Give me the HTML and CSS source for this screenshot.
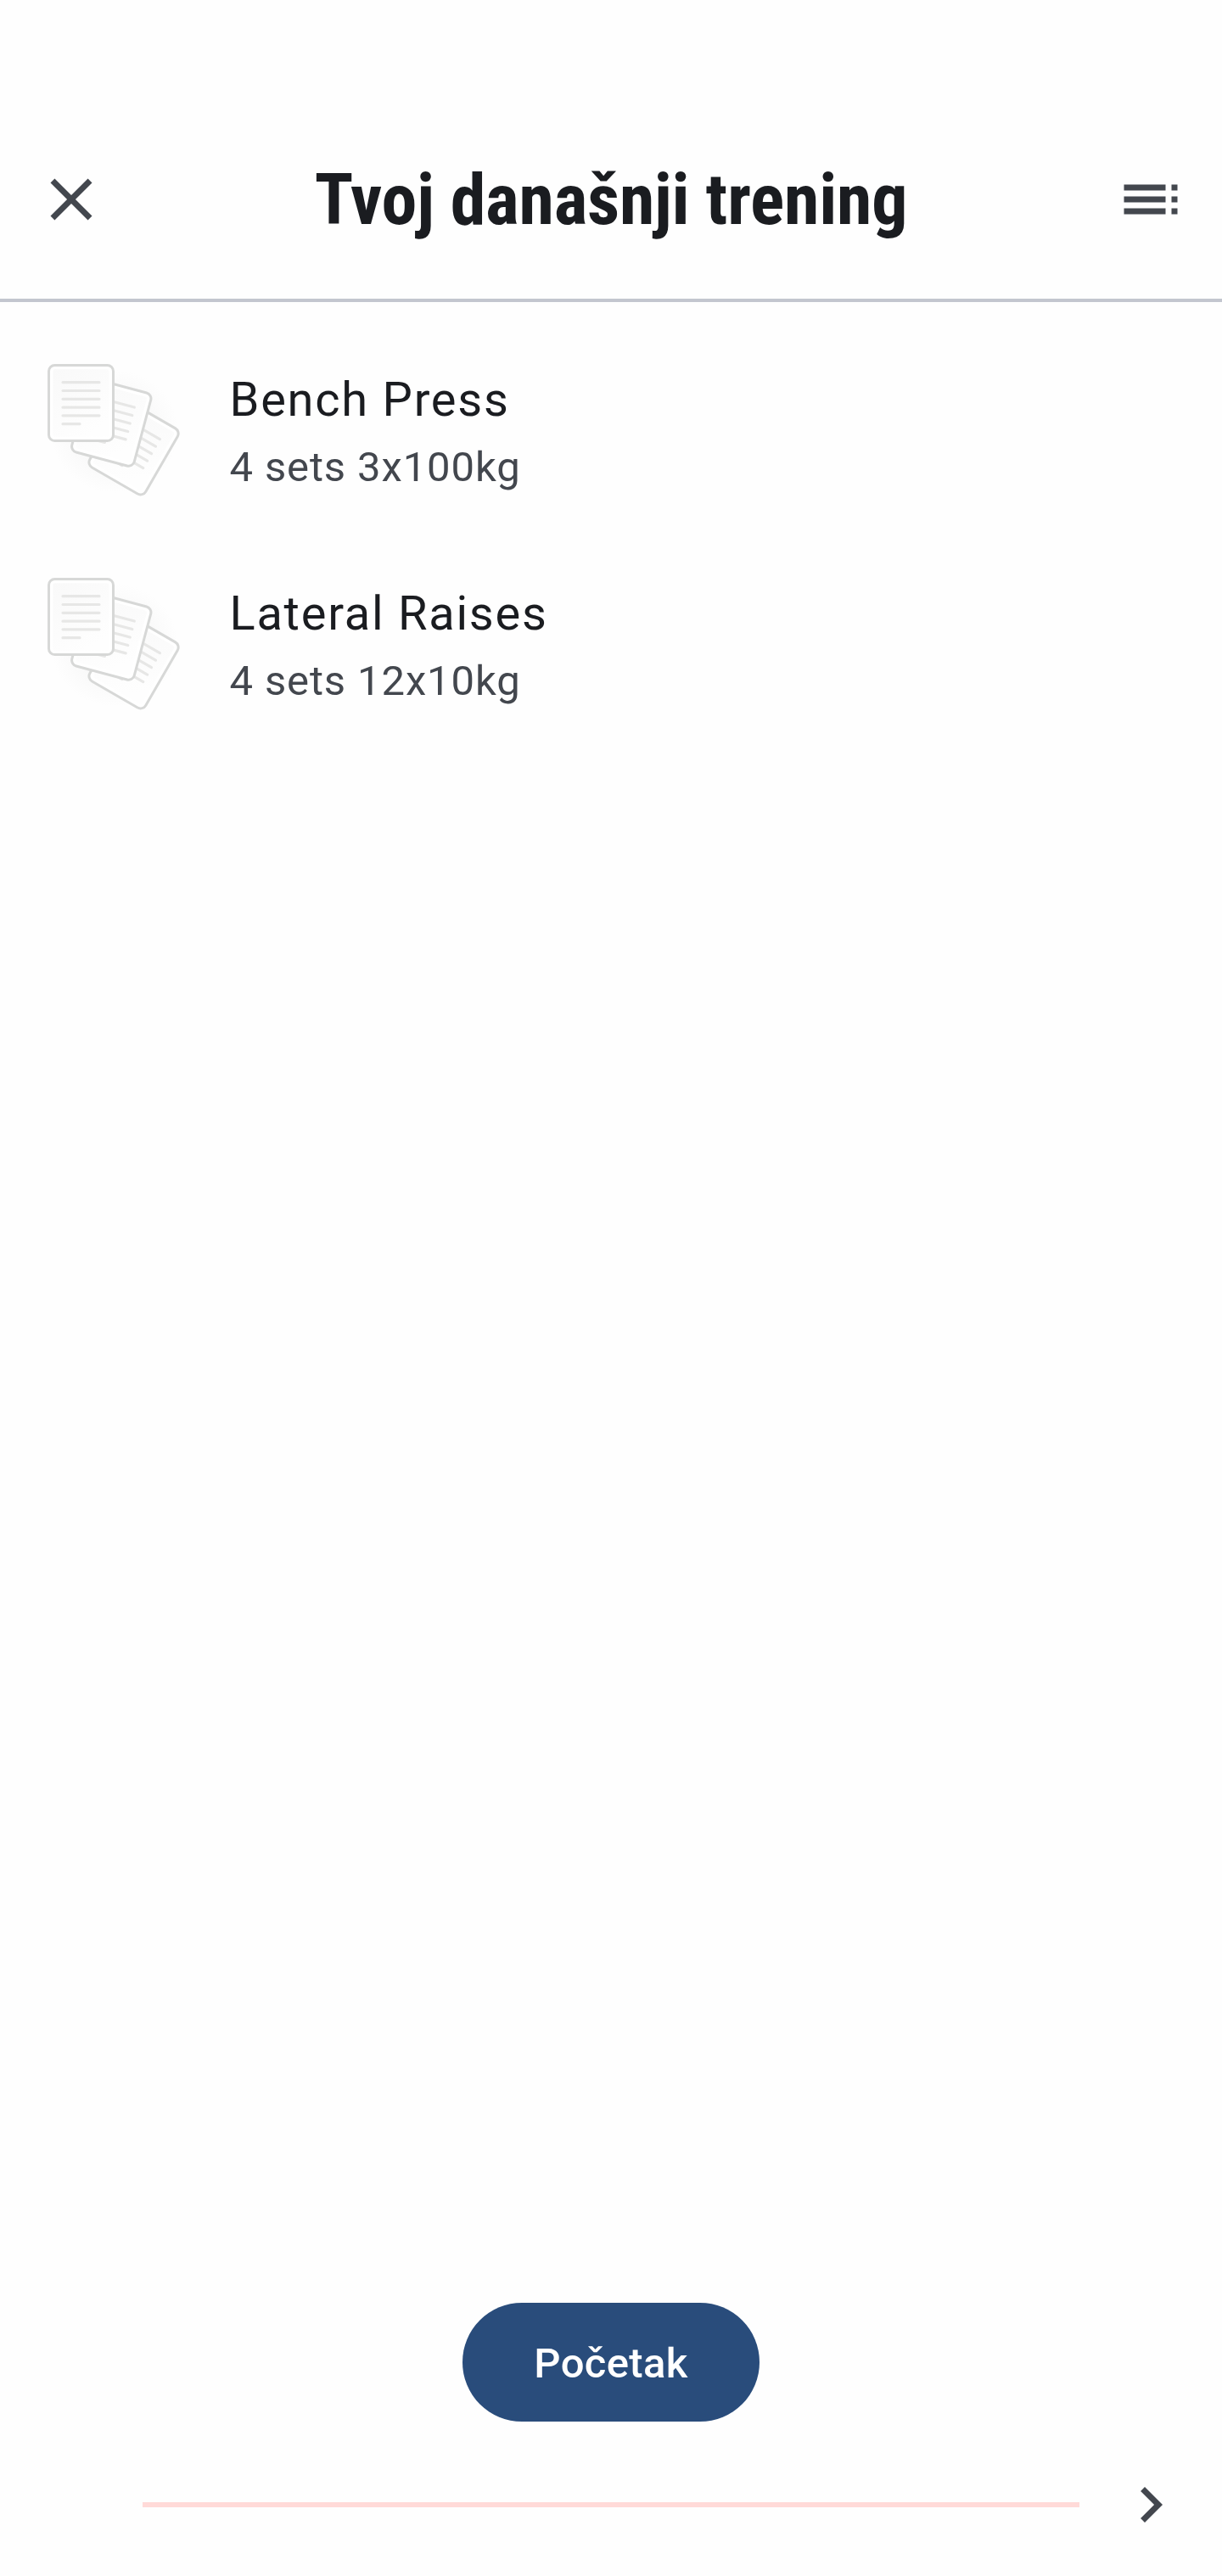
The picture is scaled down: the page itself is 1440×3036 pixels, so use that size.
FILE: index.html
```html
<!DOCTYPE html>
<html lang="hr">
<head>
<meta charset="utf-8">
<title>Tvoj današnji trening</title>
<link rel="stylesheet" href="styles.css">
</head>
<body>
<svg class="defs" aria-hidden="true">
  <defs>
    <radialGradient id="haze">
      <stop offset="0.6" stop-color="#f9f9f9"/>
      <stop offset="1" stop-color="#fefefe"/>
    </radialGradient>
    <linearGradient id="paper" x1="0" y1="0" x2="0.6" y2="1">
      <stop offset="0" stop-color="#f9f9f9"/>
      <stop offset="1" stop-color="#fefefe"/>
    </linearGradient>
    <g id="sheet">
      <rect x="4.5" y="4.5" width="228" height="267" rx="21" fill="#fff" stroke="#d7d8d7" stroke-width="9"/>
      <rect x="19" y="19" width="199" height="238" rx="8" fill="url(#paper)"/>
      <path d="M54 65H183M54 94.500H183M54 124H183M54 153.500H183M54 182.500H183M54 212H114" fill="none" stroke="#e7e7e6" stroke-width="9.500" stroke-linecap="round"/>
    </g>
    <symbol id="papers" viewBox="0 0 660 660">
      <ellipse cx="315" cy="325" rx="225" ry="218" fill="url(#haze)"/>
      <use href="#sheet" transform="translate(349 205) rotate(30)"/>
      <use href="#sheet" transform="translate(225 130) rotate(15)"/>
      <use href="#sheet" transform="translate(78 87)"/>
    </symbol>
  </defs>
</svg>
<div class="screen">
  <header class="topbar">
    <button class="icon-btn" aria-label="Zatvori"><svg class="icon" viewBox="0 0 24 24"><path d="M19 6.410L17.590 5 12 10.590 6.410 5 5 6.410 10.590 12 5 17.590 6.410 19 12 13.410 17.590 19 19 17.590 13.410 12z"/></svg></button>
    <h1 class="title">Tvoj današnji trening</h1>
    <button class="icon-btn" aria-label="Popis"><svg class="icon" viewBox="0 0 24 24"><path d="M3 9h14V7H3v2zm0 4h14v-2H3v2zm0 4h14v-2H3v2zm16 0h2v-2h-2v2zm0-10v2h2V7h-2zm0 6h2v-2h-2v2z"/></svg></button>
  </header>
  <main class="list">
    <div class="row">
      <svg class="thumb"><use href="#papers"/></svg>
      <div class="texts">
        <div class="name">Bench Press</div>
        <div class="detail">4 sets 3x100kg</div>
      </div>
    </div>
    <div class="row">
      <svg class="thumb"><use href="#papers"/></svg>
      <div class="texts">
        <div class="name">Lateral Raises</div>
        <div class="detail">4 sets 12x10kg</div>
      </div>
    </div>
  </main>
  <button class="start">Početak</button>
  <footer class="pager">
    <div class="progress"></div>
    <button class="icon-btn" aria-label="Dalje"><svg class="icon" viewBox="0 0 24 24"><path d="M10 6L8.590 7.410 13.170 12l-4.580 4.590L10 18l6-6z"/></svg></button>
  </footer>
</div>
</body>
</html>
```
FILE: styles.css
```css
* { box-sizing: border-box; }
body {
  margin: 0;
  background: #fefefe;
  color: #1a1c20;
  font-family: Roboto, "Liberation Sans", sans-serif;
}
button {
  margin: 0;
  padding: 0;
  border: 0;
  background: none;
  font-family: inherit;
}
.defs { display: block; width: 0; height: 0; }
.screen {
  display: flex;
  flex-direction: column;
  height: 3036px;
}
.topbar {
  display: flex;
  align-items: center;
  justify-content: space-between;
  height: 356px;
  padding: 118px 42px 0;
  border-bottom: 4px solid #c3c6cf;
}
.icon-btn { display: block; width: 84px; height: 84px; }
.icon { display: block; width: 84px; height: 84px; fill: #43474e; }
.title {
  margin: 0;
  padding-top: 1px;
  font-family: "Roboto Condensed", Roboto, sans-serif;
  font-stretch: 75%;
  font-size: 84px;
  font-weight: 700;
  line-height: 112px;
  letter-spacing: -0.2px;
  white-space: nowrap;
}
.list {
  flex: 1;
  padding-top: 28px;
}
.row {
  display: flex;
  align-items: center;
  gap: 20.5px;
  height: 252px;
  padding-left: 30px;
}
.thumb { width: 220px; height: 220px; }
.texts { padding-bottom: 2px; }
.name {
  font-size: 56px;
  line-height: 78px;
  letter-spacing: 1.75px;
  padding-bottom: 6px;
}
.detail {
  color: #43474e;
  font-size: 49px;
  line-height: 70px;
  letter-spacing: 0.875px;
}
.start {
  align-self: center;
  width: 350px;
  height: 140px;
  padding-top: 2px;
  border-radius: 70px;
  background: #294c7b;
  color: #fff;
  font-size: 49px;
  font-weight: 500;
  letter-spacing: 0.35px;
}
.pager {
  display: flex;
  align-items: center;
  gap: 42px;
  height: 182px;
  padding: 14px 42px 0 168px;
}
.progress { flex: 1; height: 6px; background: #ffdad8; }
```
